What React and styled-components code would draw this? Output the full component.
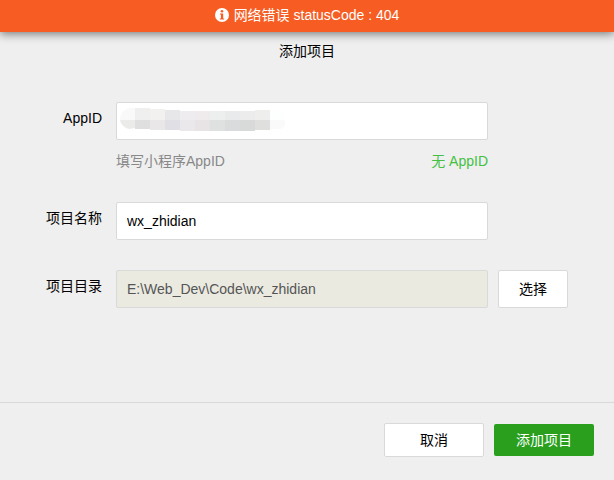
import React, { useState } from "react";
import styled, { createGlobalStyle } from "styled-components";

// [x, top, bottom, upper color, lower color]
const tiles = [
  [15, 0, 21, "#efefef", "#dfdfdf"],
  [30, 1, 22, "#f2f1ef", "#eae7e8"],
  [45, 2, 22, "#e7e7ea", "#e0dfe6"],
  [60, 3, 23, "#eeecee", "#eae8ea"],
  [75, 3, 23, "#efebec", "#e8e4e6"],
  [90, 3, 23, "#edefee", "#dfe1e0"],
  [105, 3, 23, "#e9eaeb", "#d9dbdd"],
  [120, 3, 23, "#ececed", "#d8dad9"],
  [135, 2, 22, "#eeeeec", "#dfdfdd"],
];

const MaskedId = () => (
  <Mask width="165" height="23" viewBox="0 0 165 23" aria-hidden="true">
    <path d="M15 0H10C4 1 0 6 0 12H15Z" fill="#f9f9f9" />
    <path d="M0 12C1 17 5 20 9 21L15 20V12Z" fill="#ebebea" />
    {tiles.map(([x, top, bottom, upper, lower]) => (
      <g key={x} shapeRendering="crispEdges">
        <rect x={x} y={top} width="15" height={12 - top} fill={upper} />
        <rect x={x} y="12" width="15" height={bottom - 12} fill={lower} />
      </g>
    ))}
    <path d="M150 3H161L165 7V12H150Z" fill="#fdfefe" />
    <path d="M150 12H165V18L161 21H150Z" fill="#fafafa" />
  </Mask>
);

const App = () => {
  const [appId, setAppId] = useState("");
  const [name, setName] = useState("wx_zhidian");

  return (
    <>
      <GlobalStyle />
      <Page onSubmit={(e) => e.preventDefault()}>
        <ErrorBar role="alert">
          <svg width="14" height="14" viewBox="0 0 14 14" aria-hidden="true">
            <circle cx="7" cy="7" r="7" fill="#fff" />
            <circle cx="7" cy="3.3" r="1.3" fill="#f75d23" />
            <path d="M5 5.4H8.2V10.4H9.2V11.6H4.8V10.4H5.9V6.5H5Z" fill="#f75d23" />
          </svg>
          <span>网络错误 statusCode : 404</span>
        </ErrorBar>
        <Title>添加项目</Title>

        <Fields>
          <Field>
            <Label htmlFor="appid">AppID</Label>
            <Control>
              <InputBox>
                <Input
                  id="appid"
                  value={appId}
                  onChange={(e) => setAppId(e.target.value)}
                />
                {!appId && <MaskedId />}
              </InputBox>
              <Help>
                <span>填写小程序AppID</span>
                <HelpLink href="#">无 AppID</HelpLink>
              </Help>
            </Control>
          </Field>
          <Field>
            <Label htmlFor="name">项目名称</Label>
            <Control>
              <Input
                id="name"
                value={name}
                onChange={(e) => setName(e.target.value)}
              />
            </Control>
          </Field>
          <Field>
            <Label htmlFor="dir">项目目录</Label>
            <Control>
              <Input id="dir" value="E:\Web_Dev\Code\wx_zhidian" disabled />
            </Control>
            <SelectButton type="button">选择</SelectButton>
          </Field>
        </Fields>

        <Footer>
          <Button type="button">取消</Button>
          <Button type="submit" $primary>
            添加项目
          </Button>
        </Footer>
      </Page>
    </>
  );
};

export default App;

const GlobalStyle = createGlobalStyle`
  * {
    box-sizing: border-box;
  }
  body {
    margin: 0;
    background-color: #efefef;
    color: #000;
  }
  body, input, button {
    font-family: "Liberation Sans", "Noto Sans CJK SC", sans-serif;
    font-size: 14px;
  }
`;

const Page = styled.form`
  display: flex;
  flex-direction: column;
  min-height: 100vh;
`;

const ErrorBar = styled.div`
  display: flex;
  align-items: center;
  justify-content: center;
  gap: 5px;
  height: 32px;
  padding-bottom: 2px;
  background-color: #f75d23;
  box-shadow: 0 2px 10px rgba(0, 0, 0, 0.5);
  color: #fff;
  line-height: 22px;
`;

const Title = styled.h1`
  margin: 0;
  font-size: 14px;
  font-weight: 400;
  line-height: 38px;
  text-align: center;
`;

const Fields = styled.div`
  display: flex;
  flex-direction: column;
  gap: 30px;
  padding: 32px 46px;
`;

const Field = styled.div`
  display: grid;
  grid-template-columns: 56px 1fr 70px;
  align-items: start;
`;

const Label = styled.label`
  line-height: 32px;
  text-align: right;
  white-space: nowrap;
`;

const Control = styled.div`
  margin: 0 10px 0 14px;
`;

const InputBox = styled.div`
  position: relative;
`;

const Input = styled.input`
  display: block;
  width: 100%;
  height: 38px;
  padding: 0 10px;
  border: 1px solid #d9d9d9;
  border-radius: 2px;
  background-color: #fff;
  color: #000;
  outline: none;
  &:disabled {
    background-color: #eaeae1;
    color: #555;
  }
`;

const Mask = styled.svg`
  position: absolute;
  top: 6px;
  left: 4px;
  pointer-events: none;
`;

const Help = styled.div`
  display: flex;
  justify-content: space-between;
  margin-top: 10px;
  color: #888;
  line-height: 22px;
`;

const HelpLink = styled.a`
  color: #44c043;
  text-decoration: none;
`;

const Button = styled.button`
  width: 100px;
  height: ${(props) => (props.$primary ? "32px" : "34px")};
  padding: 0 0 2px;
  border: ${(props) => (props.$primary ? "none" : "1px solid #d9d9d9")};
  border-radius: 2px;
  background-color: ${(props) => (props.$primary ? "#2a9f1e" : "#fff")};
  color: ${(props) => (props.$primary ? "#fff" : "#000")};
  cursor: pointer;
`;

const SelectButton = styled(Button)`
  width: 70px;
  height: 38px;
`;

const Footer = styled.div`
  display: flex;
  align-items: center;
  justify-content: flex-end;
  gap: 10px;
  margin-top: auto;
  padding: 20px 20px 23px;
  border-top: 1px solid #d9d9d9;
`;
